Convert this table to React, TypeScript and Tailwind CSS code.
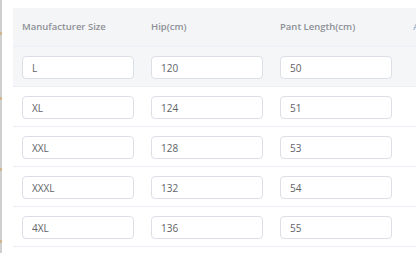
const rows = [
  { size: "L", hip: "120", pant: "50" },
  { size: "XL", hip: "124", pant: "51" },
  { size: "XXL", hip: "128", pant: "53" },
  { size: "XXXL", hip: "132", pant: "54" },
  { size: "4XL", hip: "136", pant: "55" },
];

const Field = ({ value }: { value: string }) => (
  <div className="w-[129px] shrink-0 pl-[9px]">
    <input
      readOnly
      value={value}
      className="h-[23px] w-[112px] rounded-[4px] border border-[#dcdfe6] bg-white px-[9px] text-[10px] text-[#606266] outline-none"
    />
  </div>
);

export default function App() {
  return (
    <div
      className="flex h-[253px] w-[416px] overflow-hidden bg-white"
      style={{ fontFamily: '"Open Sans", "Noto Sans", sans-serif' }}
    >
      <div className="flex w-[2px] shrink-0 flex-col items-center bg-[#cfcfcf]">
        <span className="mt-[32px] h-[3px] w-[2px] bg-[#d2b48c]" />
        <span className="mt-[62px] h-[3px] w-[2px] bg-[#d2b48c]" />
        <span className="mt-[68px] h-[3px] w-[2px] bg-[#d2b48c]" />
        <span className="mt-[69px] h-[3px] w-[2px] bg-[#d2b48c]" />
      </div>
      <div className="flex-1 overflow-hidden pl-[11px] pt-[8px]">
        <div className="w-[500px]">
          <div className="flex h-[39px] items-center border-b border-[#ebeef5] bg-[#f4f5f7] text-[9.5px] font-semibold text-[#8d9096]">
            <div className="w-[129px] shrink-0 pl-[9px]">Manufacturer Size</div>
            <div className="w-[129px] shrink-0 pl-[9px]">Hip(cm)</div>
            <div className="w-[129px] shrink-0 pl-[9px]">Pant Length(cm)</div>
            <div className="shrink-0 pl-[13px] text-[#9fb3cc]">Action</div>
          </div>
          {rows.map((r, i) => (
            <div
              key={r.size}
              className={`flex h-[40px] items-center border-b border-[#ebeef5] ${i === 0 ? "bg-[#f5f6f8]" : "bg-white"}`}
            >
              <Field value={r.size} />
              <Field value={r.hip} />
              <Field value={r.pant} />
            </div>
          ))}
        </div>
      </div>
    </div>
  );
}
